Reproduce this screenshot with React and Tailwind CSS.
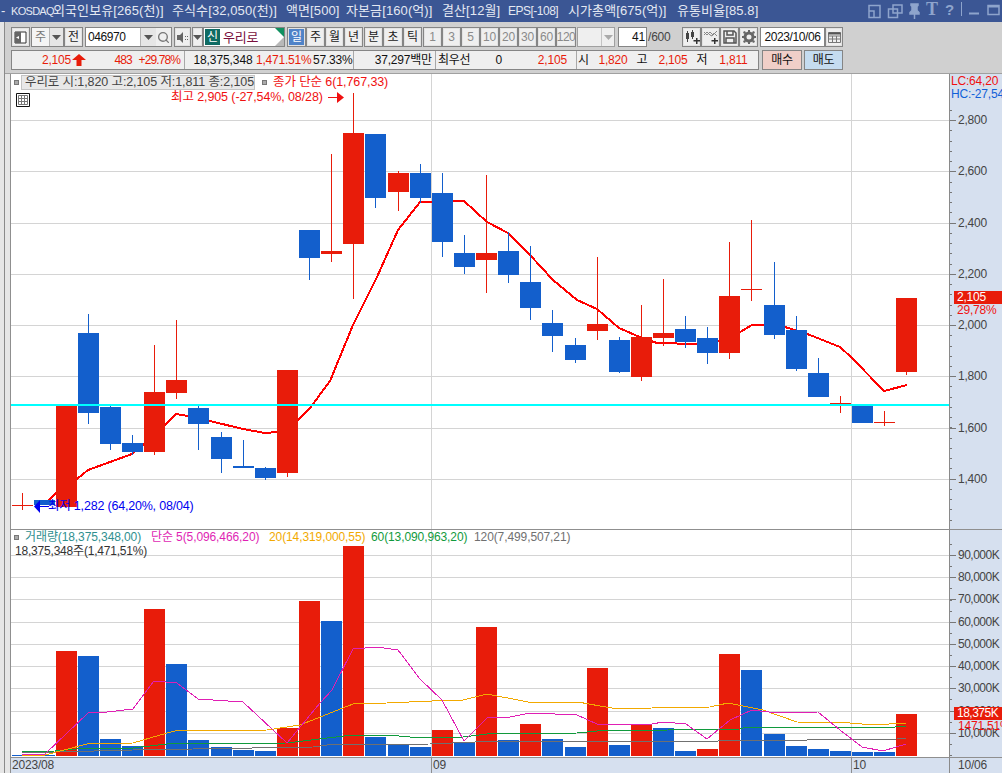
import { Search } from "lucide-react";

const RED = "#e81c0a";
const BLUE = "#135fcc";

// left, color, body top, body bottom, wick top, wick bottom
const candles = [
  [12, "r", 505, 506, 493, 510],
  [34, "b", 500, 505, 500, 505],
  [56, "r", 406, 507, 406, 507],
  [78, "b", 333, 413, 314, 424],
  [100, "b", 407, 444, 405, 450],
  [122, "b", 443, 452, 435, 455],
  [144, "r", 392, 452, 345, 455],
  [166, "r", 380, 393, 320, 399],
  [188, "b", 408, 424, 405, 450],
  [211, "b", 437, 459, 432, 473],
  [233, "b", 466, 468, 440, 468],
  [255, "b", 468, 478, 467, 480],
  [277, "r", 370, 473, 370, 477],
  [299, "b", 230, 258, 230, 280],
  [321, "r", 251, 254, 154, 262],
  [343, "r", 133, 244, 93, 299],
  [365, "b", 134, 198, 134, 208],
  [388, "r", 173, 192, 171, 211],
  [410, "b", 173, 198, 164, 203],
  [432, "b", 193, 242, 173, 257],
  [454, "b", 253, 267, 235, 274],
  [476, "r", 253, 260, 175, 293],
  [498, "b", 251, 275, 232, 283],
  [520, "b", 282, 308, 246, 320],
  [542, "b", 323, 336, 310, 352],
  [565, "b", 345, 360, 338, 363],
  [587, "r", 324, 331, 257, 340],
  [609, "b", 340, 372, 337, 373],
  [631, "r", 337, 377, 305, 381],
  [653, "r", 333, 338, 279, 346],
  [675, "b", 329, 342, 316, 348],
  [697, "b", 338, 353, 327, 364],
  [719, "r", 296, 353, 242, 359],
  [741, "r", 289, 290, 220, 301],
  [764, "b", 305, 335, 262, 339],
  [786, "b", 330, 369, 316, 371],
  [808, "b", 373, 397, 358, 397],
  [830, "r", 403, 404, 396, 413],
  [852, "b", 405, 423, 405, 423],
  [874, "r", 422, 423, 411, 426],
  [896, "r", 298, 372, 298, 375],
];

const volumes = [
  [12, "b", 755], [34, "b", 755], [56, "r", 651], [78, "b", 656], [100, "b", 739], [122, "b", 746],
  [144, "r", 609], [166, "b", 664], [188, "b", 740], [211, "b", 747], [233, "b", 750], [255, "b", 751],
  [277, "r", 728], [299, "r", 601], [321, "b", 621], [343, "r", 546], [365, "b", 737], [388, "b", 745],
  [410, "b", 747], [432, "r", 730], [454, "b", 743], [476, "r", 627], [498, "b", 740], [520, "r", 724],
  [542, "b", 739], [565, "b", 747], [587, "r", 668], [609, "b", 745], [631, "r", 724], [653, "b", 728],
  [675, "b", 751], [697, "r", 749], [719, "r", 654], [741, "b", 670], [764, "b", 734], [786, "b", 746],
  [808, "b", 749], [830, "b", 751], [852, "b", 752], [874, "b", 752], [896, "r", 714],
];

const maLine = "44,505 55,494 77,479 88,470 110,462 132,454 154,436 165,425 176,414 188,416 210,421 243,429 265,433 277,432 298,420 310,408 330,381 353,325 377,277 398,230 420,202 464,201 487,222 508,233 530,255 553,280 577,300 597,309 619,328 642,338 657,343 697,344 718,341 740,332 752,325 763,325 785,327 810,335 840,347 852,358 884,391 907,385";
const magenta = "22,754 45,754 88,713 107,712 133,709 154,681 177,683 198,699 243,702 287,743 320,703 332,690 353,649 377,647 398,650 420,679 442,700 464,741 487,718 510,717 530,713 555,714 577,715 597,724 652,724 663,722 686,724 707,739 730,720 752,710 777,713 818,712 840,730 862,747 883,751 906,744";
const orange = "22,755 45,755 87,744 133,743 167,733 175,731 267,730 300,725 353,704 387,703 432,701 463,700 487,694 528,702 578,702 600,706 618,709 652,708 710,707 728,703 763,710 797,722 850,723 873,725 906,723";
const green = "22,752 55,751 87,748 133,748 167,744 287,743 327,738 353,735 387,735 410,737 463,737 487,734 577,733 597,731 740,729 747,727 895,727 906,726";
const gray = "22,752 55,752 133,750 313,747 327,745 430,744 475,742 587,741 718,741 897,739 906,738";

const priceGrid = [120, 171, 223, 274, 325, 376, 428, 479];
const priceLabels = ["2,800", "2,600", "2,400", "2,200", "2,000", "1,800", "1,600", "1,400"];
const volGrid = [555, 577, 599, 622, 644, 666, 688, 711, 733];
const volLabels = ["90,000K", "80,000K", "70,000K", "60,000K", "50,000K", "40,000K", "30,000K", "20,000K", "10,000K"];

const priceTicks = Array.from({ length: 41 }, (_, i) => 110 + i * 10.24);
const volTicks = Array.from({ length: 20 }, (_, i) => 544 + i * 11.1);

const btn = "flex items-center justify-center h-[20px] shrink-0 border border-[#858585] bg-[#efefef] shadow-[inset_0_0_0_1px_#e2e2e2]";

const Arrow = ({ color = "#555" }) => (
  <svg width="9" height="5" viewBox="0 0 9 5"><path d="M0 0h9L4.5 5z" fill={color} /></svg>
);

const TitleIcons = () => (
  <div className="absolute right-0 top-0 h-[22px] w-[140px]">
    <svg width="140" height="22" viewBox="862 0 140 22" fill="none" stroke="#8ea4cc" strokeWidth="1.5">
      <path d="M869 5.5h11v12h-11zM869 11h5v6.5" />
      <path d="M893 5h9v8h-9zM888.5 9h9v8.500h-9z" />
      <path d="M911 4h7v1.500l-1 1v4l2 2v1.500h-9v-1.500l2-2v-4l-1-1zM914.500 14v5" fill="#8ea4cc" />
      <path d="M961.500 2v14" strokeWidth="1" />
      <path d="M969 13.500h10" strokeWidth="2" />
      <path d="M988 5.500h11v9h-11z" />
      <path d="M988 6.500h11" strokeWidth="2" />
    </svg>
    <span className="absolute left-[64px] top-[-1px] text-[18px] leading-[20px] font-bold text-[#8ea4cc] font-['Liberation_Serif',serif]">T</span>
    <span className="absolute left-[83px] top-0 text-[15px] leading-[20px] font-bold text-[#8ea4cc]">?</span>
  </div>
);

const Toolbar = () => (
  <div className="h-[51px] shrink-0 pt-[5px] pl-[6px] text-[12px] leading-none">
    <div className="flex h-[20px] items-center">
      <div className={`${btn} w-[19px]`}>
        <svg width="13" height="13" viewBox="0 0 13 13">
          <path d="M1 1h11v11H1z" fill="#fff" stroke="#333" />
          <path d="M1 1h6v11H1z" fill="#666" />
          <path d="M5 5 2 6.500 5 8z" fill="#fff" />
        </svg>
      </div>
      <div className="ml-[1px] flex h-[20px] w-[33px] border border-[#858585]">
        <div className="flex w-[17px] items-center justify-center bg-[#f4f4f4] text-[#777]">주</div>
        <div className="flex w-[14px] items-center justify-center border-l border-[#b5b5b5] bg-[#e6e6e6]"><Arrow /></div>
      </div>
      <div className={`${btn} w-[19px] text-[#222]`}>전</div>
      <div className="ml-[2px] flex h-[20px] w-[87px] border border-[#858585] bg-white">
        <div className="flex w-[54px] items-center pl-[2px] tracking-[-0.4px] text-[#111]">046970</div>
        <div className="flex w-[16px] items-center justify-center border-l border-[#b5b5b5] bg-[#e6e6e6]"><Arrow /></div>
        <div className="flex w-[15px] items-center justify-center bg-[#efefef]"><Search size={13} color="#777" strokeWidth={2.5} /></div>
      </div>
      <div className={`${btn} ml-[2px] w-[17px]`}>
        <svg width="13" height="13" viewBox="0 0 13 13">
          <path d="M1 4h3l3-3v11L4 9H1z" fill="#666" />
          <path d="M9 5h1v1H9zM9 8h1v1H9zM11 5h1v1h-1zM11 8h1v1h-1z" fill="#666" />
        </svg>
      </div>
      <div className={`${btn} ml-[1px] w-[11px]`}><Arrow /></div>
      <div className="relative flex h-[20px] w-[82px] items-center border border-[#858585] bg-white">
        <div className="ml-[1px] flex h-[16px] w-[15px] items-center justify-center bg-[#0f6b63] text-white">신</div>
        <div className="ml-[3px] text-[13px] text-[#7a0f3d]">우리로</div>
        <svg className="absolute right-0 top-0" width="9" height="18" viewBox="0 0 9 18">
          <path d="M0 0h9v9z" fill="#109060" />
          <path d="M9 9v9H0z" fill="#b8b8b8" />
        </svg>
      </div>
      <div className="ml-[2px] flex">
        <div className={`${btn} w-[19px] !bg-[#4f83c8] text-white`}>일</div>
        <div className={`${btn} w-[19px] text-[#222]`}>주</div>
        <div className={`${btn} w-[19px] text-[#222]`}>월</div>
        <div className={`${btn} w-[19px] text-[#222]`}>년</div>
      </div>
      <div className="ml-[1px] flex">
        <div className={`${btn} w-[19px] text-[#222]`}>분</div>
        <div className={`${btn} w-[20px] text-[#222]`}>초</div>
        <div className={`${btn} w-[19px] text-[#222]`}>틱</div>
      </div>
      <div className="ml-[1px] flex text-[#8a8a8a]">
        <div className={`${btn} w-[19px]`}>1</div>
        <div className={`${btn} w-[19px]`}>3</div>
        <div className={`${btn} w-[19px]`}>5</div>
        <div className={`${btn} w-[19px]`}>10</div>
        <div className={`${btn} w-[19px]`}>20</div>
        <div className={`${btn} w-[19px]`}>30</div>
        <div className={`${btn} w-[19px]`}>60</div>
        <div className={`${btn} w-[20px] tracking-[-0.5px]`}>120</div>
      </div>
      <div className="ml-[1px] flex h-[20px] w-[38px] border border-[#a0a0a0] bg-[#efefef]">
        <div className="w-[24px] border-r border-[#c4c4c4]" />
        <div className="flex flex-1 items-center justify-center"><Arrow color="#aaa" /></div>
      </div>
      <div className="ml-[3px] flex h-[20px] w-[29px] items-center justify-end border border-[#858585] bg-white pr-[1px] text-[#111]">41</div>
      <div className="ml-[1px] w-[24px] text-[#444]">/600</div>
      <div className="ml-[10px] flex">
        <div className={`${btn} w-[19px]`}>
          <svg width="16" height="14" viewBox="0 0 16 14">
            <path d="M2 3h3v6H2zM3 1h1v11H3zM7 2h3v5H7zM8 0h1v9H8z" fill="#444" />
            <path d="M12 8h1.500v2H16v1.500h-2.500V14H12v-2.500H9.500V10H12z" fill="#333" />
          </svg>
        </div>
        <div className={`${btn} w-[19px]`}>
          <svg width="16" height="14" viewBox="0 0 16 14" fill="none">
            <path d="M1 5 4 2l3 3 2 1 2-3 3 3M1 2l3 3 3-3 3 3 4-4" stroke="#888" />
            <path d="M11 8h1.500v2H15v1.500h-2.500V14H11v-2.500H8.500V10H11z" fill="#333" />
          </svg>
        </div>
        <div className={`${btn} w-[19px]`}>
          <svg width="14" height="14" viewBox="0 0 14 14" fill="none" stroke="#555" strokeWidth="1.500">
            <path d="M1 1h10l2 2v10H1z" />
            <path d="M4 1v4h6V1M3 13V8h8v5" />
          </svg>
        </div>
        <div className={`${btn} w-[19px]`}>
          <svg width="14" height="14" viewBox="0 0 14 14">
            <circle cx="7" cy="7" r="4" fill="none" stroke="#666" strokeWidth="3" />
            <path d="M6 0h2v3H6zM6 11h2v3H6zM0 6h3v2H0zM11 6h3v2h-3zM2 1l2 1-1 2-2-1zM12 1l1 2-2 1-1-2zM2 13l-1-2 2-1 1 2zM12 13l-2-1 1-2 2 1z" fill="#666" />
          </svg>
        </div>
      </div>
      <div className="ml-[2px] flex h-[20px] w-[65px] items-center justify-center border border-[#858585] bg-white tracking-[-0.4px] text-[#111]">2023/10/06</div>
      <div className={`${btn} w-[18px]`}>
        <svg width="13" height="12" viewBox="0 0 13 12" fill="none" stroke="#777">
          <path d="M.5 1.500h12v10H.5zM.5 5h12M.5 8h12M4.500 5v6M8.500 5v6" />
          <path d="M.5 2.500h12" strokeWidth="2" stroke="#555" />
        </svg>
      </div>
    </div>
    <div className="mt-[3px] flex h-[20px] items-center">
      <div className="flex h-[20px] w-[748px] border border-[#858585] bg-[#efefef] text-[#e81c0a]">
        <div className="flex w-[172px] items-center">
          <span className="w-[59px] text-right">2,105</span>
          <svg className="ml-[1px]" width="14" height="12" viewBox="0 0 14 12"><path d="M7 0l7 6H9.500v6h-5V6H0z" fill="#e81c0a" /></svg>
          <span className="w-[46px] text-right tracking-[-0.8px]">483</span>
          <span className="w-[48px] text-right tracking-[-0.9px]">+29.78%</span>
        </div>
        <div className="flex w-[170px] items-center border-l border-[#a8a8a8]">
          <span className="w-[68px] text-right tracking-[-0.1px] text-[#111]">18,375,348</span>
          <span className="w-[59px] text-right">1,471.51%</span>
          <span className="w-[41px] text-right text-[#111]">57.33%</span>
        </div>
        <div className="flex w-[82px] items-center justify-end border-l border-[#a8a8a8] pr-[3px] text-[#111]">37,297백만</div>
        <div className="flex w-[141px] items-center border-l border-[#a8a8a8] text-[#111]">
          <span className="ml-[2px] w-[36px]">최우선</span>
          <span className="w-[28px] text-right">0</span>
          <span className="w-[65px] text-right text-[#e81c0a]">2,105</span>
        </div>
        <div className="flex w-[183px] items-center border-l border-[#a8a8a8] text-[#111]">
          <span className="w-[14px] text-center">시</span>
          <span className="ml-[7px] w-[30px] text-right text-[#e81c0a]">1,820</span>
          <span className="ml-[9px] w-[12px]">고</span>
          <span className="ml-[8px] w-[31px] text-right text-[#e81c0a]">2,105</span>
          <span className="ml-[9px] w-[12px]">저</span>
          <span className="ml-[9px] w-[30px] text-right text-[#e81c0a]">1,811</span>
        </div>
      </div>
      <div className="ml-[3px] flex h-[20px] w-[40px] items-center justify-center border border-[#858585] bg-[#f0cfc8] text-[#111]">매수</div>
      <div className="ml-[2px] flex h-[20px] w-[39px] items-center justify-center border border-[#858585] bg-[#c5dcf0] text-[#111]">매도</div>
    </div>
  </div>
);

const AxisTicks = ({ ticks, majors, top, height }) => (
  <svg className="block" width="53" height={height} viewBox={`950 ${top} 53 ${height}`} shapeRendering="crispEdges">
    {ticks.map((y) => <rect key={y} x="950" y={Math.round(y)} width="2" height="1" fill="#777" />)}
    {majors.map((y) => <rect key={y} x="950" y={y} width="6" height="1" fill="#777" />)}
  </svg>
);

const PriceChart = () => (
  <svg className="block" width="938" height="455" viewBox="11 74 938 455" shapeRendering="crispEdges">
    {priceGrid.map((y) => <rect key={y} x="11" y={y} width="938" height="1" fill="#d4d4d4" />)}
    <rect x="431" y="74" width="1" height="455" fill="#d4d4d4" />
    <rect x="851" y="74" width="1" height="455" fill="#d4d4d4" />
    <polyline points={maLine} fill="none" stroke="#ff0000" strokeWidth="2" />
    {candles.map(([x, c, top, bot, wt, wb]) => (
      <g key={x} fill={c === "r" ? RED : BLUE}>
        <rect x={x + 10} y={wt} width="1" height={wb - wt} />
        <rect x={x} y={top} width="21" height={bot - top} />
      </g>
    ))}
    <rect x="11" y="404" width="938" height="2" fill="#00ffff" />
  </svg>
);

const VolumeChart = () => (
  <svg className="block" width="938" height="227" viewBox="11 530 938 227" shapeRendering="crispEdges">
    {volGrid.map((y) => <rect key={y} x="11" y={y} width="938" height="1" fill="#d4d4d4" />)}
    <rect x="431" y="530" width="1" height="227" fill="#d4d4d4" />
    <rect x="851" y="530" width="1" height="227" fill="#d4d4d4" />
    {volumes.map(([x, c, top]) => (
      <rect key={x} x={x} y={top} width="21" height={756 - top} fill={c === "r" ? RED : BLUE} />
    ))}
    <polyline points={gray} fill="none" stroke="#707070" />
    <polyline points={green} fill="none" stroke="#109a3c" />
    <polyline points={orange} fill="none" stroke="#f2a900" />
    <polyline points={magenta} fill="none" stroke="#e01fb4" />
  </svg>
);

export default function App() {
  return (
    <div className="flex h-[773px] w-[1002px] flex-col overflow-hidden bg-[#d0d0d0] font-['Liberation_Sans','Noto_Sans_CJK_KR',sans-serif] text-[12px] tracking-[-0.2px]">
      <div className="relative flex h-[22px] shrink-0 items-center whitespace-nowrap bg-[#3b5694] text-[13px] tracking-[0.1px] text-[#e4e8f2]">
        <span className="ml-[1px] w-[10px]">-</span>
        <span className="w-[42px] text-[11px] tracking-[-0.7px]">KOSDAQ</span>
        <span className="w-[119px]">외국인보유[265(천)]</span>
        <span className="w-[114px]">주식수[32,050(천)]</span>
        <span className="w-[60px]">액면[500]</span>
        <span className="w-[96px]">자본금[160(억)]</span>
        <span className="w-[66px]">결산[12월]</span>
        <span className="w-[60px] text-[12px] tracking-[-0.5px]">EPS[-108]</span>
        <span className="w-[109px]">시가총액[675(억)]</span>
        <span>유통비율[85.8]</span>
        <TitleIcons />
      </div>

      <div className="flex min-h-0 flex-1">
        <div className="w-[5px] shrink-0 border-r border-[#8a8a8a] bg-[#e6e6e6]" />
        <div className="flex min-w-0 flex-1 flex-col">
          <Toolbar />
          <div className="flex min-h-0 flex-1 border-t border-[#a0a0a0]">
            <div className="w-[5px] shrink-0 border-r border-[#8f8f8f] bg-[#e6e6e6] box-content" />
            <div className="flex min-w-0 flex-1 flex-col">
              <div className="flex h-[455px] shrink-0">
                <div className="relative w-[938px] bg-white">
                  <PriceChart />
                  <div className="absolute left-[3px] top-[6px] size-[5px] border border-[#777] bg-[#aaa]" />
                  <div className="absolute left-[10px] top-[1px] flex h-[15px] w-[234px] items-center whitespace-nowrap border border-[#c4c4c4] bg-[#e8e8e8] pl-[3px] text-[12.5px] tracking-[-0.1px] text-[#444]">우리로 시:1,820 고:2,105 저:1,811 종:2,105</div>
                  <div className="absolute left-[251px] top-[6px] size-[5px] border border-[#777] bg-[#aaa]" />
                  <div className="absolute left-[262px] top-[1px] text-[12.5px] leading-[15px] tracking-[-0.1px] text-[#f01010]">종가 단순 6(1,767,33)</div>
                  <svg className="absolute left-[5px] top-[19px]" width="14" height="14" viewBox="0 0 14 14" fill="none">
                    <path d="M.5.5h13v13H.5z" stroke="#111" />
                    <path d="M2.500 2.500h9v9h-9zM2.500 5.500h9M2.500 8.500h9M5.500 2.500v9M8.500 2.500v9" stroke="#777" />
                  </svg>
                  <div className="absolute left-[160px] top-[16px] text-[12.5px] leading-[15px] tracking-[-0.1px] text-[#f01010]">최고 2,905 (-27,54%, 08/28)</div>
                  <svg className="absolute left-[317px] top-[18px]" width="16" height="11" viewBox="0 0 16 11"><path d="M0 5h9V0l7 5.500L9 11V6H0z" fill="#f01010" /></svg>
                  <svg className="absolute left-[23px] top-[426px]" width="15" height="13" viewBox="0 0 15 13"><path d="M15 6H6V0L0 6.500 6 13V7h9z" fill="#0000f0" /></svg>
                  <div className="absolute left-[37px] top-[425px] text-[12.5px] leading-[15px] text-[#0000f0]">최저 1,282 (64,20%, 08/04)</div>
                </div>
                <div className="relative w-[53px] overflow-hidden border-l border-[#8a8a8a] bg-[#d6e0ef]">
                  <AxisTicks ticks={priceTicks} majors={priceGrid} top={74} height={455} />
                  <div className="absolute left-[1px] top-0 leading-[14px] text-[#f01010]">LC:64,20</div>
                  <div className="absolute left-[1px] top-[13px] whitespace-nowrap leading-[14px] text-[#1060d8]">HC:-27,54</div>
                  {priceLabels.map((t, i) => (
                    <div key={t} className="absolute left-[8px] leading-[14px] text-[#444]" style={{ top: priceGrid[i] - 74 - 7 }}>{t}</div>
                  ))}
                  <div className="absolute left-[4px] top-[217px] h-[13px] w-[48px] bg-[#e81c0a] pl-[3px] leading-[13px] text-white">2,105</div>
                  <div className="absolute left-[7px] top-[230px] leading-[13px] text-[#f01010]">29,78%</div>
                </div>
              </div>

              <div className="flex h-[228px] shrink-0 border-t border-[#8f8f8f]">
                <div className="relative w-[938px] bg-white">
                  <VolumeChart />
                  <div className="absolute left-[3px] top-[5px] size-[5px] border border-[#777] bg-[#aaa]" />
                  <div className="absolute left-[14px] top-0 flex whitespace-nowrap leading-[15px] tracking-[-0.1px]">
                    <span className="w-[126px] text-[#2f8f8f]">거래량(18,375,348,00)</span>
                    <span className="w-[118px] text-[#e01fb4]">단순 5(5,096,466,20)</span>
                    <span className="w-[102px] text-[#f2a900]">20(14,319,000,55)</span>
                    <span className="w-[103px] text-[#109a3c]">60(13,090,963,20)</span>
                    <span className="text-[#707070]">120(7,499,507,21)</span>
                  </div>
                  <div className="absolute left-[4px] top-[14px] leading-[14px] text-[#333]">18,375,348주(1,471,51%)</div>
                </div>
                <div className="relative w-[53px] overflow-hidden border-l border-[#8a8a8a] bg-[#d6e0ef]">
                  <AxisTicks ticks={volTicks} majors={volGrid} top={530} height={227} />
                  {volLabels.map((t, i) => (
                    <div key={t} className="absolute left-[8px] leading-[14px] tracking-[-0.5px] text-[#444]" style={{ top: volGrid[i] - 530 - 7 }}>{t}</div>
                  ))}
                  <div className="absolute left-[4px] top-[177px] h-[13px] w-[48px] bg-[#e81c0a] pl-[3px] leading-[13px] tracking-[-0.5px] text-white">18,375K</div>
                  <div className="absolute left-[8px] top-[190px] w-[45px] overflow-hidden whitespace-nowrap leading-[13px] text-[#f01010]">1471,51%</div>
                </div>
              </div>

              <div className="flex h-[16px] shrink-0 border-t border-[#8f8f8f] bg-[#d6e0ef] leading-[15px] text-[#444]">
                <div className="w-[420px] pl-[1px]">2023/08</div>
                <div className="w-[420px] border-l border-[#8f8f8f] pl-[1px]">09</div>
                <div className="w-[98px] border-l border-[#8f8f8f] pl-[1px]">10</div>
                <div className="flex-1 border-l border-[#8a8a8a] pl-[8px]">10/06</div>
              </div>
            </div>
          </div>
        </div>
      </div>
    </div>
  );
}
